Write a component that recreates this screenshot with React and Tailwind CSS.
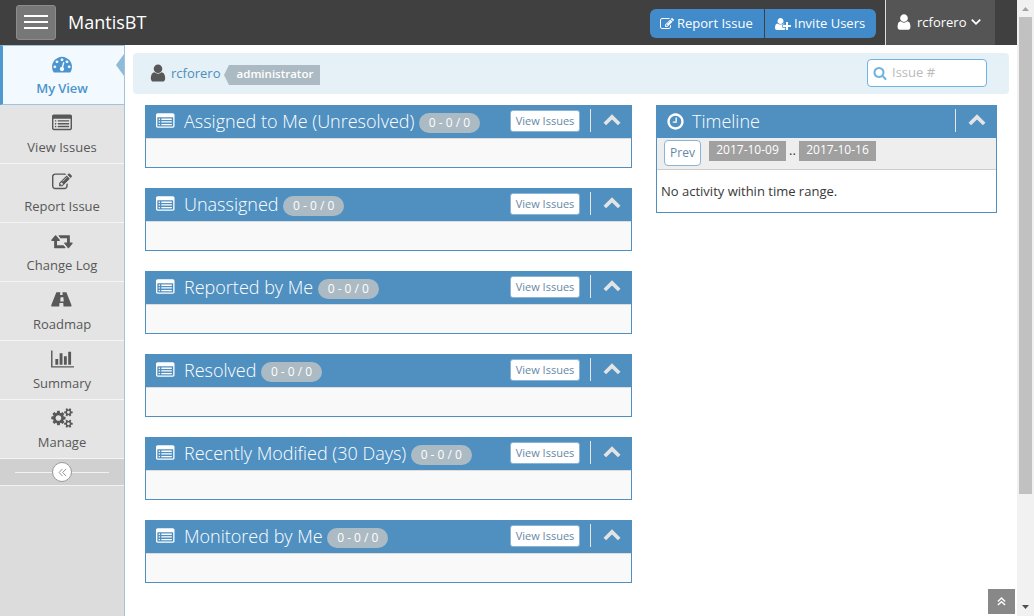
const PATHS = {
  edit: [1792, "M888 1184l116-116-152-152-116 116v56h96v96h56zm440-720q-16-16-33 1l-350 350q-17 17-1 33t33-1l350-350q17-17 1-33zm80 594v190q0 119-84.5 203.5t-203.5 84.5h-832q-119 0-203.5-84.5t-84.5-203.5v-832q0-119 84.5-203.5t203.5-84.5h832q63 0 117 25 15 7 18 23 3 17-9 29l-49 49q-14 14-32 8-23-6-45-6h-832q-66 0-113 47t-47 113v832q0 66 47 113t113 47h832q66 0 113-47t47-113v-126q0-13 9-22l64-64q15-15 35-7t20 29zm-96-738l288 288-672 672h-288v-288zm444 132l-92 92-288-288 92-92q28-28 68-28t68 28l152 152q28 28 28 68t-28 68z"],
  user: [1792, "M1536 1399q0 109-62.5 187t-150.5 78h-854q-88 0-150.5-78t-62.5-187q0-85 8.5-160.5t31.5-152 58.5-131 94-89 134.5-34.5q131 128 313 128t313-128q76 0 134.5 34.5t94 89 58.5 131 31.5 152 8.5 160.5zm-256-887q0 159-112.5 271.5t-271.5 112.5-271.5-112.5-112.5-271.5 112.5-271.5 271.5-112.5 271.5 112.5 112.5 271.5z"],
  userPlus: [2048, "M704 896q-159 0-271.5-112.5t-112.5-271.5 112.5-271.5 271.5-112.5 271.5 112.5 112.5 271.5-112.5 271.5-271.5 112.5zm960 128h352q13 0 22.5 9.5t9.5 22.5v192q0 13-9.5 22.5t-22.5 9.5h-352v352q0 13-9.5 22.5t-22.5 9.5h-192q-13 0-22.5-9.5t-9.5-22.5v-352h-352q-13 0-22.5-9.5t-9.5-22.5v-192q0-13 9.5-22.5t22.5-9.5h352v-352q0-13 9.5-22.5t22.5-9.5h192q13 0 22.5 9.5t9.5 22.5v352zm-736 224q0 52 38 90t90 38h256v238q-68 50-171 50h-874q-121 0-194-69t-73-190q0-53 3.5-103.5t14-109 26.5-108.5 43-97.5 62-81 85.5-53.5 111.5-20q19 0 39 17 79 61 154.5 91.5t164.5 30.5 164.5-30.5 154.5-91.5q20-17 39-17 132 0 217 96h-223q-52 0-90 38t-38 90v192z"],
  gauge: [1792, "M384 1152q0-53-37.5-90.5t-90.5-37.5-90.5 37.5-37.5 90.5 37.5 90.5 90.5 37.5 90.5-37.5 37.5-90.5zm192-448q0-53-37.5-90.5t-90.5-37.5-90.5 37.5-37.5 90.5 37.5 90.5 90.5 37.5 90.5-37.5 37.5-90.5zm428 481l101-382q6-26-7.5-48.5t-38.5-29.5-48 6.5-30 39.5l-101 382q-60 5-107 43.5t-63 98.5q-20 77 20 146t117 89 146-20 89-117q16-60-6-117t-72-91zm660-33q0-53-37.5-90.5t-90.5-37.5-90.5 37.5-37.5 90.5 37.5 90.5 90.5 37.5 90.5-37.5 37.5-90.5zm-640-640q0-53-37.5-90.5t-90.5-37.5-90.5 37.5-37.5 90.5 37.5 90.5 90.5 37.5 90.5-37.5 37.5-90.5zm448 192q0-53-37.5-90.5t-90.5-37.5-90.5 37.5-37.5 90.5 37.5 90.5 90.5 37.5 90.5-37.5 37.5-90.5zm320 448q0 261-141 483-19 29-54 29h-1402q-35 0-54-29-141-221-141-483 0-182 71-348t191-286 286-191 348-71 348 71 286 191 191 286 71 348z"],
  list: [1792, "M384 1184v64q0 13-9.5 22.5t-22.5 9.5h-64q-13 0-22.5-9.5t-9.5-22.5v-64q0-13 9.5-22.5t22.5-9.5h64q13 0 22.5 9.5t9.5 22.5zm0-256v64q0 13-9.5 22.5t-22.5 9.5h-64q-13 0-22.5-9.5t-9.5-22.5v-64q0-13 9.5-22.5t22.5-9.5h64q13 0 22.5 9.5t9.5 22.5zm0-256v64q0 13-9.5 22.5t-22.5 9.5h-64q-13 0-22.5-9.5t-9.5-22.5v-64q0-13 9.5-22.5t22.5-9.5h64q13 0 22.5 9.5t9.5 22.5zm1152 512v64q0 13-9.5 22.5t-22.5 9.5h-960q-13 0-22.5-9.5t-9.5-22.5v-64q0-13 9.5-22.5t22.5-9.5h960q13 0 22.5 9.5t9.5 22.5zm0-256v64q0 13-9.5 22.5t-22.5 9.5h-960q-13 0-22.5-9.5t-9.5-22.5v-64q0-13 9.5-22.5t22.5-9.5h960q13 0 22.5 9.5t9.5 22.5zm0-256v64q0 13-9.5 22.5t-22.5 9.5h-960q-13 0-22.5-9.5t-9.5-22.5v-64q0-13 9.5-22.5t22.5-9.5h960q13 0 22.5 9.5t9.5 22.5zm128 704v-832q0-13-9.5-22.5t-22.5-9.5h-1472q-13 0-22.5 9.5t-9.5 22.5v832q0 13 9.5 22.5t22.5 9.5h1472q13 0 22.5-9.5t9.5-22.5zm128-1088v1088q0 66-47 113t-113 47h-1472q-66 0-113-47t-47-113v-1088q0-66 47-113t113-47h1472q66 0 113 47t47 113z"],
  retweet: [1920, "M1280 1504q0 13-9.5 22.5t-22.5 9.5h-960q-8 0-13.5-2t-9-7-5.5-8-3-11.5-1-11.5v-600h-192q-26 0-45-19t-19-45q0-24 15-41l320-384q19-22 49-22t49 22l320 384q15 17 15 41 0 26-19 45t-45 19h-192v384h576q16 0 25 11l160 192q7 10 7 21zm640-416q0 24-15 41l-320 384q-20 23-49 23t-49-23l-320-384q-15-17-15-41 0-26 19-45t45-19h192v-384h-576q-16 0-25-12l-160-192q-7-9-7-20 0-13 9.5-22.5t22.5-9.5h960q8 0 13.5 2t9 7 5.5 8 3 11.5 1 11.5v600h192q26 0 45 19t19 45z"],
  road: [1920, "M1111 1000v-4l-24-320q-1-13-11-22.5t-23-9.5h-186q-13 0-23 9.5t-11 22.5l-24 320v4q-1 12 8 20t21 8h244q12 0 21-8t8-20zm702 405q0 73-46 73h-704q13 0 22-9.5t8-22.5l-20-256q-1-13-11-22.5t-23-9.5h-272q-13 0-23 9.5t-11 22.5l-20 256q-1 13 8 22.5t22 9.5h-704q-46 0-46-73 0-54 26-116l417-1044q8-19 26-33t38-14h339q-13 0-23 9.5t-11 22.5l-15 192q-1 14 8 23t22 9h166q13 0 22-9t8-23l-15-192q-1-13-11-22.5t-23-9.5h339q20 0 38 14t26 33l417 1044q26 62 26 116z"],
  chart: [2048, "M640 896v512h-256v-512h256zm384-512v1024h-256v-1024h256zm1024 1152v128h-2048v-1536h128v1408h1920zm-640-896v768h-256v-768h256zm384-384v1152h-256v-1152h256z"],
  cogs: [1920, "M896 896q0-106-75-181t-181-75-181 75-75 181 75 181 181 75 181-75 75-181zm768 512q0-52-38-90t-90-38-90 38-38 90q0 53 37.5 90.5t90.5 37.5 90.5-37.5 37.5-90.5zm0-1024q0-52-38-90t-90-38-90 38-38 90q0 53 37.5 90.5t90.5 37.5 90.5-37.5 37.5-90.5zm-384 421v185q0 10-7 19.5t-16 10.5l-155 24q-11 35-32 76 34 48 90 115 7 11 7 20 0 12-7 19-23 30-82.5 89.5t-78.5 59.5q-11 0-21-7l-115-90q-37 19-77 31-11 108-23 155-7 24-30 24h-186q-11 0-20-7.5t-10-17.5l-23-153q-34-10-75-31l-118 89q-7 7-20 7-11 0-21-8-144-133-144-160 0-9 7-19 10-14 41-53t47-61q-23-44-35-82l-152-24q-10-1-17-9.5t-7-19.5v-185q0-10 7-19.5t16-10.5l155-24q11-35 32-76-34-48-90-115-7-11-7-20 0-12 7-20 22-30 82-89t79-59q11 0 21 7l115 90q34-18 77-32 11-108 23-154 7-24 30-24h186q11 0 20 7.5t10 17.5l23 153q34 10 75 31l118-89q8-7 20-7 11 0 21 8 144 133 144 160 0 8-7 19-12 16-42 54t-45 60q23 48 34 82l152 23q10 2 17 10.5t7 19.5zm640 533v140q0 16-149 31-12 27-30 52 51 113 51 138 0 4-4 7-122 71-124 71-8 0-46-47t-52-68q-20 2-30 2t-30-2q-14 21-52 68t-46 47q-2 0-124-71-4-3-4-7 0-25 51-138-18-25-30-52-149-15-149-31v-140q0-16 149-31 13-29 30-52-51-113-51-138 0-4 4-7 4-2 35-20t59-34 30-16q8 0 46 46.5t52 67.5q20-2 30-2t30 2q51-71 92-112l6-2q4 0 124 70 4 3 4 7 0 25-51 138 17 23 30 52 149 15 149 31zm0-1024v140q0 16-149 31-12 27-30 52 51 113 51 138 0 4-4 7-122 71-124 71-8 0-46-47t-52-68q-20 2-30 2t-30-2q-14 21-52 68t-46 47q-2 0-124-71-4-3-4-7 0-25 51-138-18-25-30-52-149-15-149-31v-140q0-16 149-31 13-29 30-52-51-113-51-138 0-4 4-7 4-2 35-20t59-34 30-16q8 0 46 46.5t52 67.5q20-2 30-2t30 2q51-71 92-112l6-2q4 0 124 70 4 3 4 7 0 25-51 138 17 23 30 52 149 15 149 31z"],
  search: [1792, "M1216 832q0-185-131.5-316.5t-316.5-131.5-316.5 131.5-131.5 316.5 131.5 316.5 316.5 131.5 316.5-131.5 131.5-316.5zm512 832q0 52-38 90t-90 38q-54 0-90-38l-343-342q-179 124-399 124-143 0-273.5-55.5t-225-150-150-225-55.5-273.5 55.5-273.5 150-225 225-150 273.5-55.5 273.5 55.5 225 150 150 225 55.5 273.5q0 220-124 399l343 343q37 37 37 90z"],
  clock: [1792, "M1024 544v448q0 14-9 23t-23 9h-320q-14 0-23-9t-9-23v-64q0-14 9-23t23-9h224v-352q0-14 9-23t23-9h64q14 0 23 9t9 23zm416 352q0-148-73-273t-198-198-273-73-273 73-198 198-73 273 73 273 198 198 273 73 273-73 198-198 73-273zm224 0q0 209-103 385.5t-279.5 279.5-385.5 103-385.5-103-279.5-279.5-103-385.5 103-385.5 279.5-279.5 385.5-103 385.5 103 279.5 279.5 103 385.5z"],
  chevronUp: [1792, "M1683 1331l-166 165q-19 19-45 19t-45-19l-531-531-531 531q-19 19-45 19t-45-19l-166-165q-19-19-19-45.5t19-45.5l742-741q19-19 45-19t45 19l742 741q19 19 19 45.5t-19 45.5z"],
};

function Icon({ name, className }) {
  const [width, d] = PATHS[name];
  return (
    <svg viewBox={`0 0 ${width} 1792`} className={`shrink-0 ${className}`} fill="currentColor">
      <path d={d} />
    </svg>
  );
}

function DoubleAngle({ className }) {
  return (
    <svg viewBox="0 0 10 10" className={className} fill="none" stroke="currentColor">
      <path d="M5 1 1.2 5 5 9M9 1 5.2 5 9 9" />
    </svg>
  );
}

const NAV = [
  { label: "View Issues", icon: "list", size: "h-5 w-5" },
  { label: "Report Issue", icon: "edit", size: "h-5 w-5" },
  { label: "Change Log", icon: "retweet", size: "h-5 w-[22px]" },
  { label: "Roadmap", icon: "road", size: "h-5 w-[22px]" },
  { label: "Summary", icon: "chart", size: "h-5 w-[23px]" },
  { label: "Manage", icon: "cogs", size: "h-5 w-[22px]" },
];

const BOXES = [
  "Assigned to Me (Unresolved)",
  "Unassigned",
  "Reported by Me",
  "Resolved",
  "Recently Modified (30 Days)",
  "Monitored by Me",
];

function Navbar() {
  return (
    <header className="flex h-[45px] bg-[#404040] text-white">
      <button className="mt-[5px] ml-4 flex h-[35px] w-10 flex-col items-center gap-1 rounded-[3px] border border-[#8c8c8c] bg-[#777] pt-[9px]">
        <span className="h-0.5 w-6 bg-white" />
        <span className="h-0.5 w-6 bg-white" />
        <span className="h-0.5 w-6 bg-white" />
      </button>
      <span className="ml-3 text-[18px] leading-[44px]">MantisBT</span>
      <div className="mt-[9px] ml-auto flex h-[29px] gap-px text-[13px]">
        <a className="flex w-[114px] items-center rounded-l-md bg-[#428bca] pl-[10px]">
          <Icon name="edit" className="mr-[3px] h-[14px] w-[14px]" />
          <span className="whitespace-nowrap">Report Issue</span>
        </a>
        <a className="flex w-[111px] items-center rounded-r-md bg-[#428bca] pl-[10px]">
          <Icon name="userPlus" className="mr-[3px] h-[14px] w-4" />
          <span className="whitespace-nowrap">Invite Users</span>
        </a>
      </div>
      <div className="mr-[22px] ml-[9px] flex w-[110px] items-center border-l border-[#ddd] bg-[#555] pl-[9px] text-[13px]">
        <Icon name="user" className="-mt-0.5 h-[18px] w-[18px]" />
        <span className="mr-[5px] ml-1">rcforero</span>
        <svg viewBox="0 0 10 8" className="-mt-px h-2 w-[10px]" fill="none" stroke="currentColor" strokeWidth="1.8">
          <path d="M.8 1.6 5 5.8 9.2 1.6" />
        </svg>
      </div>
    </header>
  );
}

function Sidebar() {
  return (
    <nav className="w-[125px] shrink-0 border-r border-[#9fc4dc] bg-[#dcdcdc] text-center text-[13px] text-[#585858]">
      <div className="relative flex h-[60px] flex-col items-center border-y border-l-[3px] border-y-[#9fc4dc] border-l-[#4f99d0] bg-[#f2f9ff] pt-2 pr-[3px] font-semibold text-[#4b94ce]">
        <Icon name="gauge" className="h-5 w-5" />
        <span className="mt-[4px] leading-5 tracking-[-0.1px]">My View</span>
        <svg viewBox="0 0 8 22" className="absolute top-2 right-0 h-[22px] w-2">
          <path d="M8 0 0 11 8 22Z" fill="#8fbad8" />
        </svg>
      </div>
      {NAV.map((item) => (
        <div key={item.label} className="flex h-[59px] flex-col items-center border-b border-[#f5f5f5] bg-[#e4e4e4] pt-2">
          <Icon name={item.icon} className={item.size} />
          <span className="mt-1 leading-5">{item.label}</span>
        </div>
      ))}
      <div className="flex h-[27px] items-center border-b border-[#f2f2f2] bg-[#d0d0d0] px-[15px]">
        <span className="h-px flex-1 bg-[#f2f2f2]" />
        <span className="flex h-5 w-5 items-center justify-center rounded-full border border-[#999] bg-white text-[#888]">
          <DoubleAngle className="h-[9px] w-[9px]" />
        </span>
        <span className="h-px flex-1 bg-[#f2f2f2]" />
      </div>
    </nav>
  );
}

function Collapse() {
  return (
    <span className="flex h-[23px] w-[41px] items-start border-l border-[#e6e6e6] pl-3 text-[#e4e4e4]">
      <svg viewBox="0 0 18 12" className="mt-[5px] h-3 w-[18px]" fill="none" stroke="currentColor" strokeWidth="3.7">
        <path d="M1.8 10 9 2.9 16.2 10" />
      </svg>
    </span>
  );
}

function IssueBox({ title }) {
  return (
    <section className="h-[63px] border border-[#4f90c1] bg-[#f9f9f9]">
      <div className="flex h-8 items-start bg-[#4f90c1] text-white">
        <Icon name="list" className="mt-[5.7px] ml-[10px] h-[18.5px] w-[18.5px]" />
        <h4 className="ml-[9.5px] text-[18px] leading-[31px] font-light whitespace-nowrap">{title}</h4>
        <span className="mt-[7px] ml-[4.6px] h-5 w-[61px] rounded-full bg-[#abbac3] text-center text-[12px] leading-5">0 - 0 / 0</span>
        <div className="mt-[3px] ml-auto flex">
          <a className="mt-px mr-[10px] h-[22px] w-[70px] rounded-[3px] border border-[#8cb4d6] bg-white text-center text-[11px] leading-5 whitespace-nowrap text-[#6688a6]">View Issues</a>
          <Collapse />
        </div>
      </div>
      <div className="border-t border-[#ddd]" />
    </section>
  );
}

function Timeline() {
  return (
    <section className="h-[108px] w-[341px] shrink-0 border border-[#4f90c1] bg-white">
      <div className="flex h-8 items-start bg-[#4f90c1] text-white">
        <Icon name="clock" className="mt-[6px] ml-[8.5px] h-[19px] w-[19px]" />
        <h4 className="ml-[7.5px] text-[18px] leading-[31px] font-light">Timeline</h4>
        <div className="mt-[3px] ml-auto flex"><Collapse /></div>
      </div>
      <div className="flex h-8 items-start border-b border-[#ccc] bg-[#eee] pl-[7px] text-[13px]">
        <a className="mt-[2px] h-[26px] w-[37px] rounded-[4px] border border-[#8cb4d6] bg-white text-center text-[12px] leading-6 text-[#6688a6]">Prev</a>
        <span className="mt-[3px] ml-2 h-5 w-[77px] bg-[#a0a0a0] text-center text-[12px] leading-[18px] text-white">2017-10-09</span>
        <span className="mt-[2px] w-[13px] text-center leading-5 text-[#393939]">..</span>
        <span className="mt-[3px] h-5 w-[77px] bg-[#a0a0a0] text-center text-[12px] leading-[18px] text-white">2017-10-16</span>
      </div>
      <p className="mt-[11px] ml-1 text-[13px] leading-5 text-[#393939]">No activity within time range.</p>
    </section>
  );
}

export default function App() {
  return (
    <div className="relative flex h-[616px] w-[1034px] overflow-hidden bg-white font-['Open_Sans',sans-serif]">
      <div className="flex w-[1017px] flex-col">
        <Navbar />
        <div className="flex min-h-0 flex-1">
          <Sidebar />
          <main className="flex-1 px-2 pt-2">
            <div className="flex h-[41px] items-center rounded-[4px] bg-[#e6f0f7] pr-[22px] pl-[15px] text-[13px]">
              <Icon name="user" className="mb-0.5 h-5 w-5 text-[#585858]" />
              <a className="ml-[3px] text-[#4c8fbd]">rcforero</a>
              <span className="mt-[3px] ml-1 flex h-5">
                <svg viewBox="0 0 5 20" className="h-5 w-[5px]"><path d="M5 0 0 10 5 20Z" fill="#abbac3" /></svg>
                <span className="w-[91px] bg-[#abbac3] text-center text-[11.5px] leading-[18px] font-semibold text-white">administrator</span>
              </span>
              <label className="mb-px ml-auto flex h-7 w-[120px] items-center rounded-[4px] border border-[#6fb3e0] bg-white pl-[5px] text-[#6fb3e0]">
                <Icon name="search" className="h-[14px] w-[14px]" />
                <span className="ml-[5px] text-[#bababa]">Issue #</span>
              </label>
            </div>
            <div className="mt-[11px] flex items-start gap-6 px-3">
              <div className="flex w-[487px] flex-col gap-5">
                {BOXES.map((title) => <IssueBox key={title} title={title} />)}
              </div>
              <Timeline />
            </div>
          </main>
        </div>
      </div>
      <div className="flex w-[17px] flex-col items-center bg-[#f1f1f1]">
        <svg viewBox="0 0 17 17" className="h-[17px] w-[17px]"><path d="M5 11 8.5 7 12 11Z" fill="#a3a3a3" /></svg>
        <div className="h-[477px] w-[13px] bg-[#c1c1c1]" />
        <svg viewBox="0 0 17 17" className="mt-auto h-[17px] w-[17px]"><path d="M5 6 8.5 10 12 6Z" fill="#505050" /></svg>
      </div>
      <a className="absolute right-[19px] bottom-[2px] flex h-[25px] w-[27px] items-center justify-center bg-[#888] text-white">
        <DoubleAngle className="h-[9px] w-[9px] rotate-90 stroke-[1.6]" />
      </a>
    </div>
  );
}
